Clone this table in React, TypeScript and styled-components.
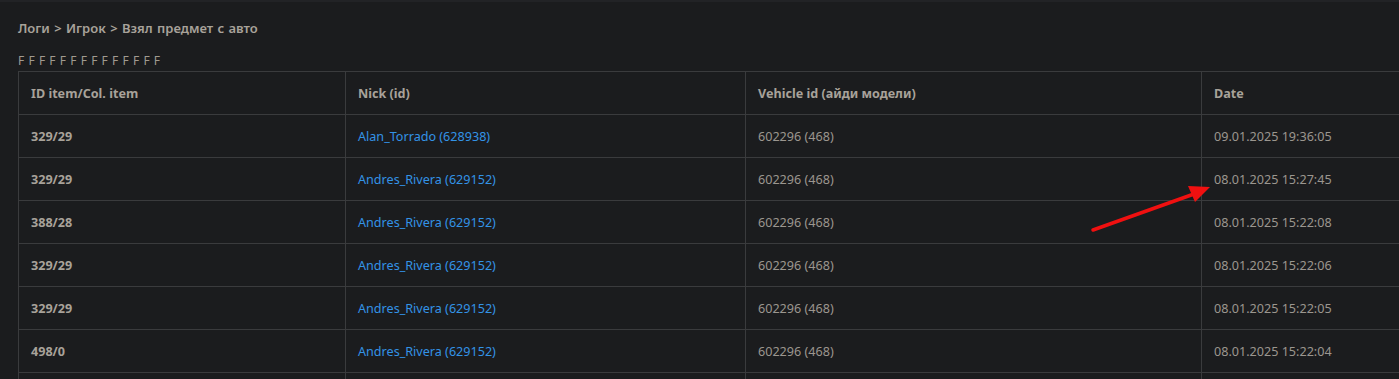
import React from 'react'
import styled, { createGlobalStyle } from 'styled-components'

const GlobalStyle = createGlobalStyle`
  html, body {
    margin: 0;
    padding: 0;
    background: #1b1c1e;
    overflow: hidden;
  }
  body {
    font-family: 'Noto Sans', 'Open Sans', sans-serif;
  }
`

const Page = styled.div`
  position: relative;
  width: 1399px;
  height: 379px;
  overflow: hidden;
  background: #1b1c1e;
  border-top: 2px solid #222326;
  box-sizing: border-box;
  padding: 0 0 0 18px;
`

const Breadcrumb = styled.div`
  margin-top: 17px;
  height: 18px;
  line-height: 18px;
  font-size: 13px;
  font-weight: 600;
  color: #a8a29a;
  word-spacing: 1px;
`

const Filler = styled.div`
  margin-top: 17px;
  height: 14px;
  line-height: 14px;
  font-size: 12px;
  color: #a09a90;
  letter-spacing: 0.55px;
`

const Table = styled.table`
  margin-top: 3px;
  border-collapse: collapse;
  table-layout: fixed;
  width: 1560px;
  font-size: 12.6px;
`

const Col = styled.col<{ $w: number }>`
  width: ${p => p.$w}px;
`

const Cell = styled.td<{ $bold?: boolean; $link?: boolean }>`
  height: 42px;
  padding: 0 12px;
  border: 1px solid #3a3b3d;
  white-space: nowrap;
  font-weight: ${p => (p.$bold ? 700 : 400)};
  color: ${p => (p.$link ? '#3393e6' : p.$bold ? '#a8a29a' : '#9b968f')};
`

const HeadCell = styled.th`
  height: 42px;
  padding: 0 12px;
  border: 1px solid #3a3b3d;
  text-align: left;
  font-weight: 700;
  color: #a8a29a;
  white-space: nowrap;
`

const Arrow = styled.svg`
  position: absolute;
  left: 1088px;
  top: 180px;
`

const rows = [
  ['329/29', 'Alan_Torrado (628938)', '602296 (468)', '09.01.2025 19:36:05'],
  ['329/29', 'Andres_Rivera (629152)', '602296 (468)', '08.01.2025 15:27:45'],
  ['388/28', 'Andres_Rivera (629152)', '602296 (468)', '08.01.2025 15:22:08'],
  ['329/29', 'Andres_Rivera (629152)', '602296 (468)', '08.01.2025 15:22:06'],
  ['329/29', 'Andres_Rivera (629152)', '602296 (468)', '08.01.2025 15:22:05'],
  ['498/0', 'Andres_Rivera (629152)', '602296 (468)', '08.01.2025 15:22:04'],
]

const App: React.FC = () => {
  return (
    <>
      <GlobalStyle />
      <Page>
        <Breadcrumb>Логи &gt; Игрок &gt; Взял предмет с авто</Breadcrumb>
        <Filler>F F F F F F F F F F F F F F</Filler>
        <Table>
          <colgroup>
            <Col $w={327} />
            <Col $w={400} />
            <Col $w={456} />
            <Col $w={377} />
          </colgroup>
          <thead>
            <tr>
              <HeadCell>ID item/Col. item</HeadCell>
              <HeadCell>Nick (id)</HeadCell>
              <HeadCell>Vehicle id (айди модели)</HeadCell>
              <HeadCell>Date</HeadCell>
            </tr>
          </thead>
          <tbody>
            {rows.map((r, i) => (
              <tr key={i}>
                <Cell $bold>{r[0]}</Cell>
                <Cell $link>{r[1]}</Cell>
                <Cell>{r[2]}</Cell>
                <Cell>{r[3]}</Cell>
              </tr>
            ))}
            <tr>
              <Cell />
              <Cell />
              <Cell />
              <Cell />
            </tr>
          </tbody>
        </Table>
        <Arrow width="130" height="56" viewBox="0 0 130 56">
          <line x1="5" y1="48" x2="106" y2="12" stroke="#f01010" strokeWidth="3.5" strokeLinecap="round" />
          <polygon points="122,5 100,4 107,20" fill="#f01010" />
        </Arrow>
      </Page>
    </>
  )
}

export default App
